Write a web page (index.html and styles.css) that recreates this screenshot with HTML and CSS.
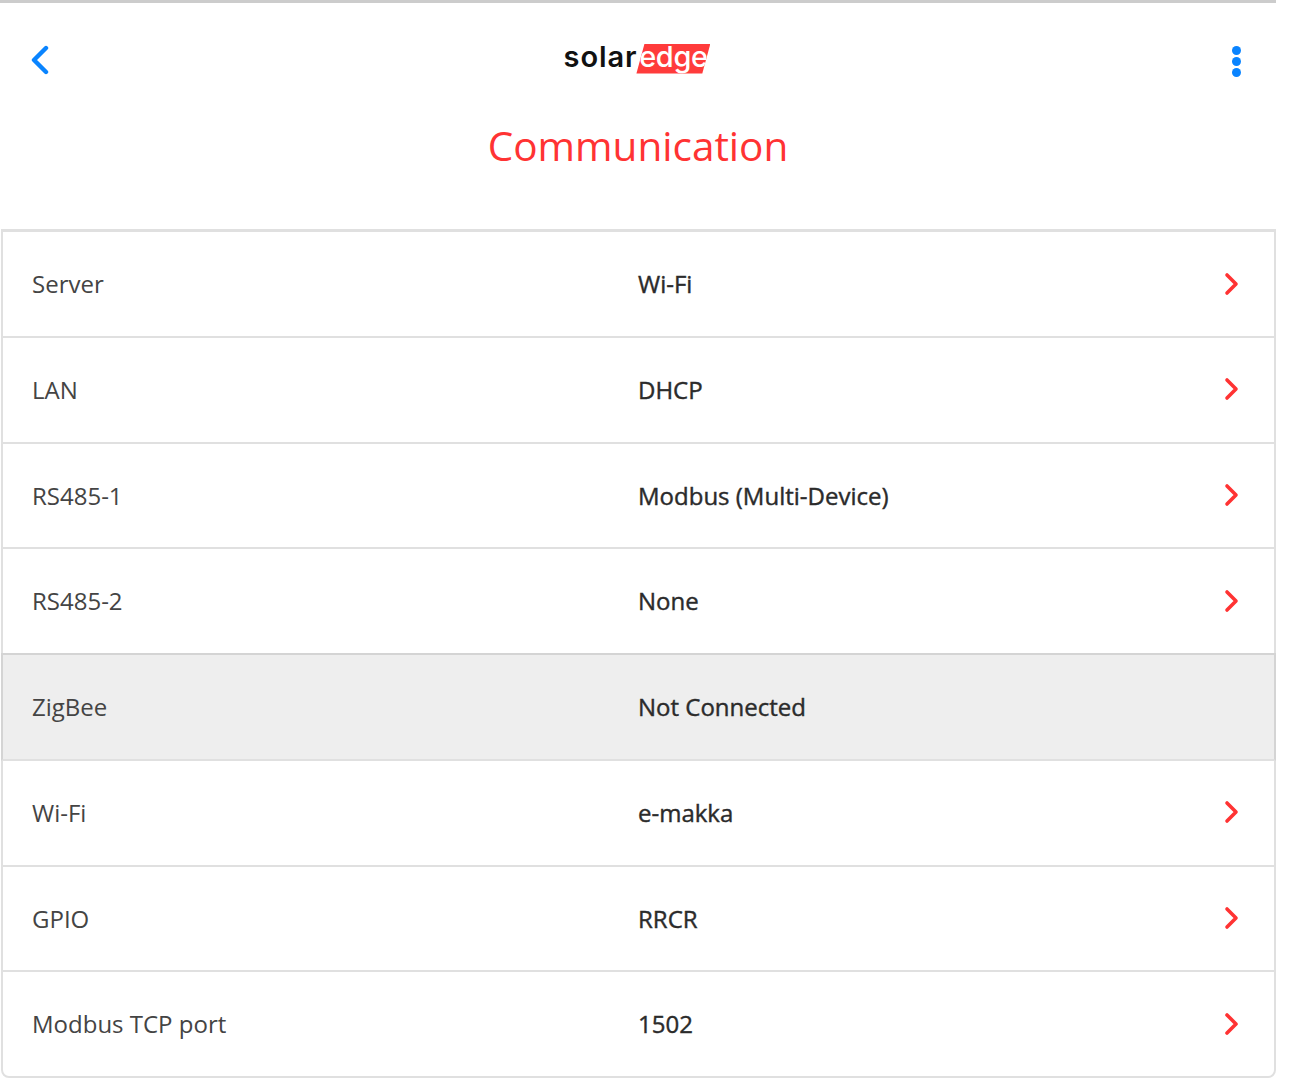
FILE: index.html
```html
<!DOCTYPE html>
<html lang="en">

<head>
    <meta charset="UTF-8">
    <meta name="viewport" content="width=device-width, initial-scale=1.0">
    <title>Communication</title>
    <link rel="stylesheet" href="styles.css">
</head>

<body>
    <div class="page">
        <header class="top-bar">
            <a class="back-btn" href="#">
                <svg width="20" height="30" viewBox="0 0 20 30"><path d="M16 3 L4 15 L16 27" fill="none" stroke="#0a84ff" stroke-width="4.4" stroke-linecap="round" stroke-linejoin="round"/></svg>
            </a>
            <div class="logo">
                <span class="logo-solar">solar</span>
                <span class="logo-edge">edge</span>
            </div>
            <a class="menu-btn" href="#">
                <span></span><span></span><span></span>
            </a>
        </header>

        <h1 class="title">Communication</h1>

        <!-- Settings list -->
        <div class="list">
            <div class="row"><span class="label">Server</span><span class="value">Wi-Fi</span><svg class="arrow" width="16" height="24" viewBox="0 0 16 24"><path d="M3 3 L12 12 L3 21" fill="none" stroke="#ff3333" stroke-width="3.6" stroke-linecap="round" stroke-linejoin="round"/></svg></div>
            <div class="row"><span class="label">LAN</span><span class="value">DHCP</span><svg class="arrow" width="16" height="24" viewBox="0 0 16 24"><path d="M3 3 L12 12 L3 21" fill="none" stroke="#ff3333" stroke-width="3.6" stroke-linecap="round" stroke-linejoin="round"/></svg></div>
            <div class="row"><span class="label">RS485-1</span><span class="value">Modbus (Multi-Device)</span><svg class="arrow" width="16" height="24" viewBox="0 0 16 24"><path d="M3 3 L12 12 L3 21" fill="none" stroke="#ff3333" stroke-width="3.6" stroke-linecap="round" stroke-linejoin="round"/></svg></div>
            <div class="row"><span class="label">RS485-2</span><span class="value">None</span><svg class="arrow" width="16" height="24" viewBox="0 0 16 24"><path d="M3 3 L12 12 L3 21" fill="none" stroke="#ff3333" stroke-width="3.6" stroke-linecap="round" stroke-linejoin="round"/></svg></div>
            <div class="row disabled"><span class="label">ZigBee</span><span class="value">Not Connected</span></div>
            <div class="row"><span class="label">Wi-Fi</span><span class="value">e-makka</span><svg class="arrow" width="16" height="24" viewBox="0 0 16 24"><path d="M3 3 L12 12 L3 21" fill="none" stroke="#ff3333" stroke-width="3.6" stroke-linecap="round" stroke-linejoin="round"/></svg></div>
            <div class="row"><span class="label">GPIO</span><span class="value">RRCR</span><svg class="arrow" width="16" height="24" viewBox="0 0 16 24"><path d="M3 3 L12 12 L3 21" fill="none" stroke="#ff3333" stroke-width="3.6" stroke-linecap="round" stroke-linejoin="round"/></svg></div>
            <div class="row"><span class="label">Modbus TCP port</span><span class="value">1502</span><svg class="arrow" width="16" height="24" viewBox="0 0 16 24"><path d="M3 3 L12 12 L3 21" fill="none" stroke="#ff3333" stroke-width="3.6" stroke-linecap="round" stroke-linejoin="round"/></svg></div>
        </div>
    </div>
</body>

</html>
```
FILE: styles.css
```css
body {
    font-family: "Open Sans", sans-serif;
    margin: 0;
    padding: 0;
    background-color: #fff;
    color: #333;
}

.page {
    width: 1276px;
    border-top: 3px solid #ccc;
}

.top-bar {
    display: grid;
    grid-template-columns: 1fr auto 1fr;
    align-items: center;
    height: 112px;
    padding: 0 35px 0 30px;
}

.back-btn {
    display: flex;
    margin-top: 1px;
}

.logo {
    display: flex;
    align-items: center;
    margin-top: -1px;
    margin-left: 3px;
}

.logo-solar {
    font-family: Inter, sans-serif;
    font-size: 29px;
    font-weight: 600;
    line-height: 30px;
    color: #111;
    letter-spacing: 0.9px;
    margin-top: -4px;
}

.logo-edge {
    display: flex;
    justify-content: center;
    width: 74px;
    height: 30px;
    margin-left: -1px;
    font-family: Inter, sans-serif;
    font-size: 29px;
    font-weight: 500;
    letter-spacing: -0.4px;
    line-height: 26px;
    color: #fff;
    background: #ff3b3b;
    clip-path: polygon(11% 0, 100% 0, 89% 100%, 0 100%);
}

.menu-btn {
    display: flex;
    flex-direction: column;
    gap: 2px;
    justify-self: end;
    margin-top: 4px;
}

.menu-btn span {
    display: block;
    width: 9px;
    height: 9px;
    border-radius: 50%;
    background: #0a84ff;
}

.title {
    margin: 0;
    height: 114px;
    text-align: center;
    font-size: 40.5px;
    font-weight: 400;
    line-height: 62px;
    color: #ff3333;
}

.list {
    margin-left: 1px;
    border: 2px solid #e0e0e0;
    border-top-width: 3px;
    border-radius: 0 0 8px 8px;
}

.row {
    display: flex;
    align-items: center;
    box-sizing: border-box;
    height: 105.75px;
    padding-bottom: 0.5px;
    border-bottom: 2px solid #e0e0e0;
}

.row:last-child {
    height: 103.75px;
    border-bottom: none;
}

.row.disabled {
    margin: -2px -2px 0;
    height: 107.75px;
    border: 2px solid #d4d4d4;
    border-bottom-color: #e0e0e0;
    background-color: #eee;
}

.label {
    width: 635px;
    padding-left: 29px;
    box-sizing: border-box;
    font-size: 24px;
    color: #444;
}

.value {
    flex: 1;
    font-size: 24px;
    color: #2b2b2b;
    -webkit-text-stroke: 0.4px #2b2b2b;
}

.arrow {
    margin-right: 34px;
}
```
